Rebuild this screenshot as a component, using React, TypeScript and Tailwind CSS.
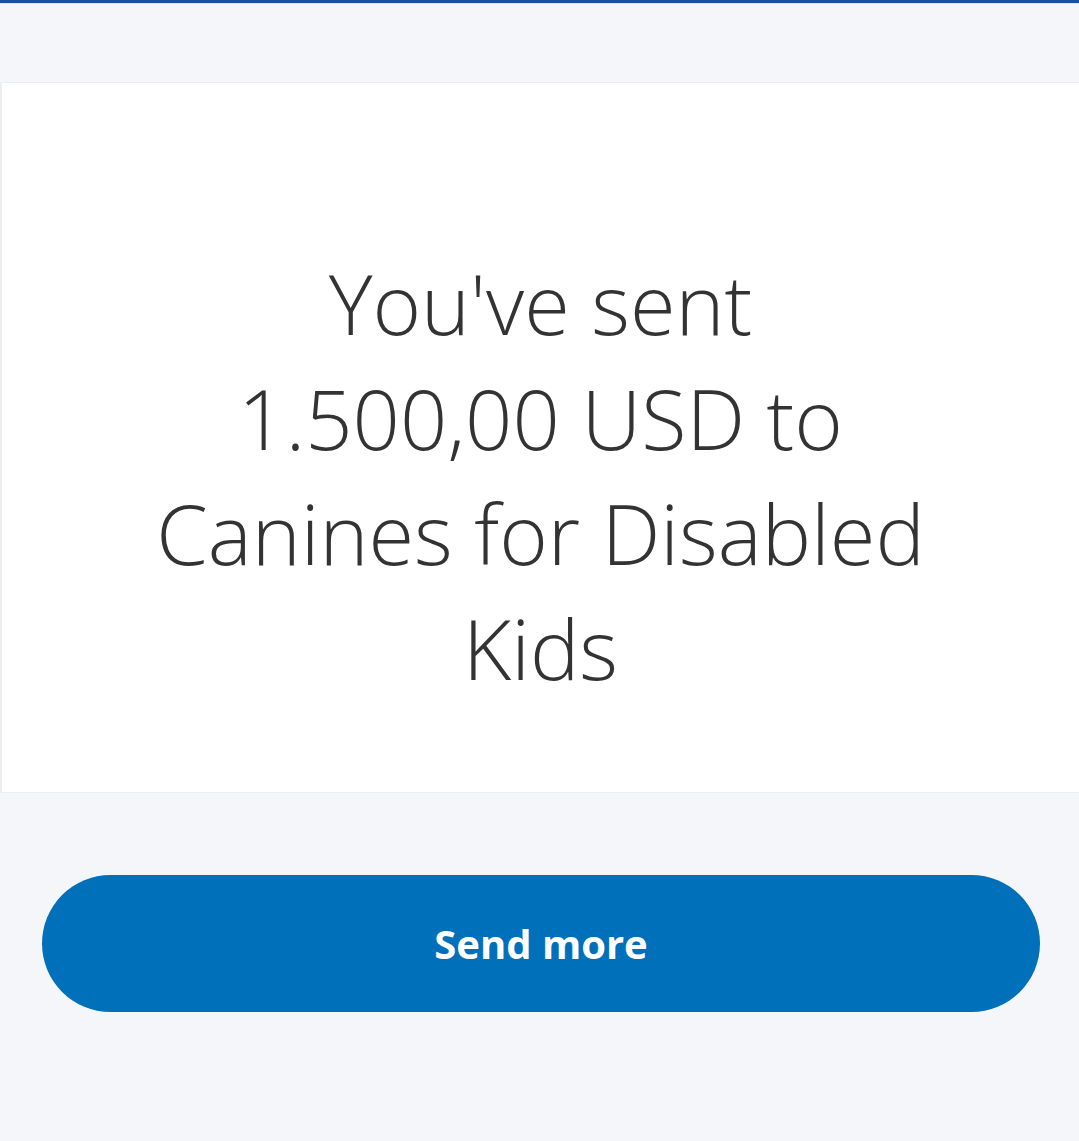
export default function App() {
  return (
    <div className="min-h-[1141px] bg-[#f5f6fa] flex flex-col" style={{ fontFamily: '"Open Sans", "Noto Sans", sans-serif' }}>
      <div className="h-[3px] bg-[#17519b]" />
      <div className="h-px bg-[#d9eef7]" />

      {/* confirmation card */}
      <div className="mt-[78px] bg-white border-y border-l-2 border-[#eceef1] pt-[162px] pb-[87px]">
        <h1 className="text-center font-light text-[83px] leading-[115px] text-[#333333] whitespace-nowrap">
          You've sent
          <br />
          1.500,00 USD to
          <br />
          Canines for Disabled
          <br />
          Kids
        </h1>
      </div>

      <div className="mt-[82px] ml-[42px] mr-[39px]">
        <button className="w-full h-[137px] rounded-full bg-[#0070ba] text-white text-[40px] font-bold">
          Send more
        </button>
      </div>
    </div>
  );
}
